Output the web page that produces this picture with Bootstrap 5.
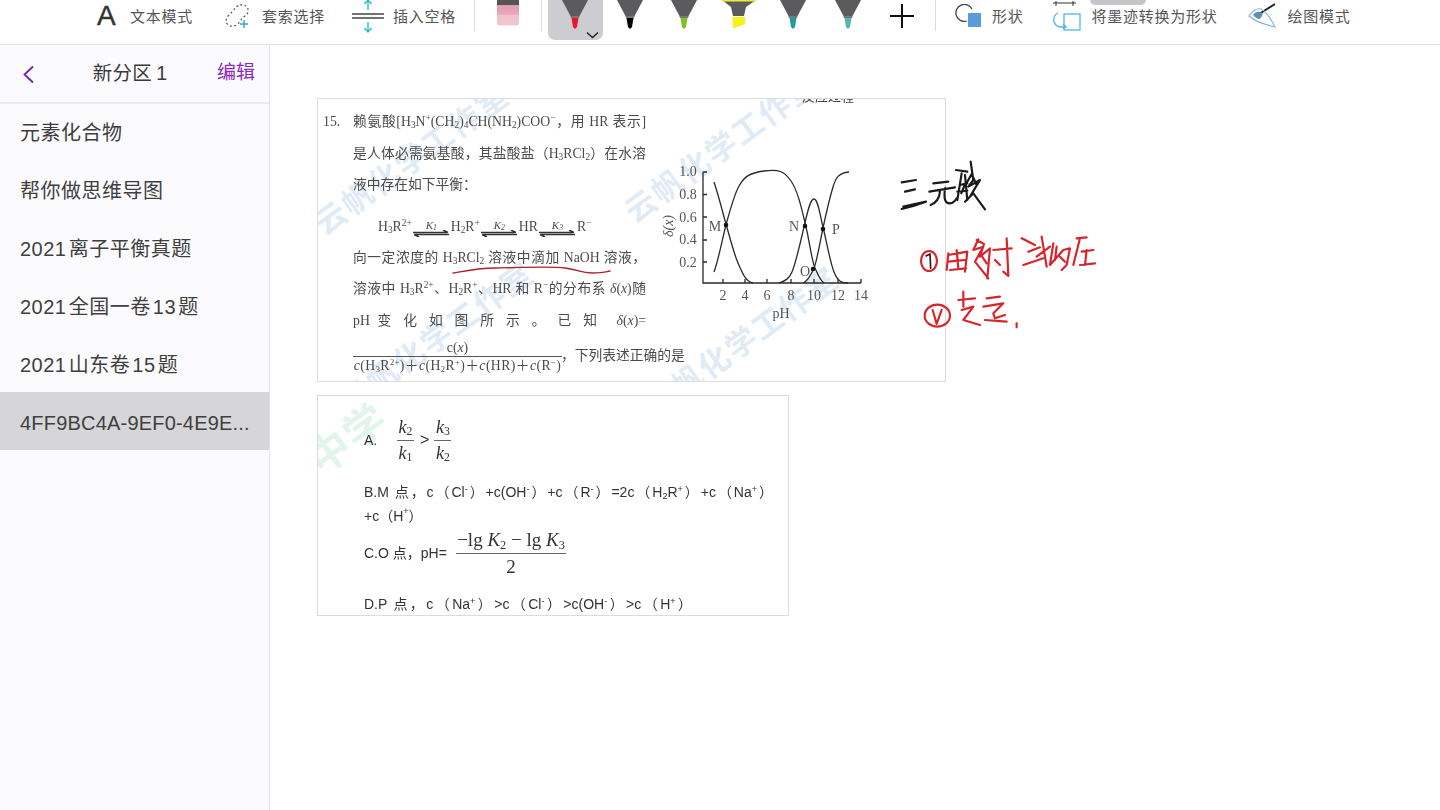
<!DOCTYPE html>
<html lang="zh">
<head>
<meta charset="UTF-8" />
<title>新分区 1</title>
<link href="https://cdn.jsdelivr.net/npm/bootstrap@5.3.0/dist/css/bootstrap.min.css" rel="stylesheet" />
<style>
  html, body { height: 100%; overflow: hidden; }
  body { font-family: "Liberation Sans", "Noto Sans CJK SC", sans-serif; background: #fff; color: #333; }

  /* toolbar */
  .tb { height: 45px; padding-left: 97px; border-bottom: 1px solid #e3e4ea; background: #fff; position: relative; }
  .tb-item { display: flex; align-items: center; height: 32px; flex: none; }
  .tb-label { font-size: 15px; letter-spacing: .75px; color: #555; white-space: nowrap; line-height: 1; }
  .tb-a { font-size: 28px; line-height: 1; color: #333; width: 17px; margin-right: 16px; -webkit-text-stroke: .4px #333; }
  .tb-lasso { margin-left: 32px; }
  .tb-lasso svg { margin-right: 12px; }
  .tb-space { margin-left: 27px; }
  .tb-space svg { margin-right: 9px; }
  .tb-sep { width: 1px; height: 31px; background: #dcdcdf; flex: none; }
  .tb-sep-1 { margin-left: 18px; }
  .tb-eraser { margin-left: 22px; align-items: flex-start; }
  .tb-sep-2 { margin-left: 22px; }
  .tb-pens { margin-left: 6px; }
  .pen-cell { width: 54.5px; height: 40px; display: flex; justify-content: center; align-items: flex-start; position: relative; flex: none; }
  .pen-on { background: #cdcdd1; border-radius: 0 0 7px 7px; }
  .pen-caret { position: absolute; right: 4px; bottom: 1px; }
  .tb-plus { align-items: center; height: 32px; }
  .tb-sep-3 { margin-left: 5.5px; }
  .tb-shape { margin-left: 19px; }
  .tb-shape svg { margin-right: 11px; }
  .tb-conv { margin-left: 28px; }
  .tb-conv svg { margin-right: 10px; }
  .tb-draw { margin-left: 30px; }
  .tb-draw svg { margin-right: 12px; }
  .tb-peek { position: absolute; left: 1090px; top: 0; width: 56px; height: 5px; background: #c6c6ca; border-radius: 0 0 6px 6px; }

  /* sidebar */
  .wrap { height: 765px; }
  .side { width: 270px; flex: none; background: #fbfbfe; border-right: 1px solid #e4e4e8; }
  .side-head { height: 59px; border-bottom: 2px solid #ebebee; position: relative; margin-bottom: -2px; padding-right: 9px; }
  .side-title { font-size: 19.5px; color: #3a3a3a; letter-spacing: .3px; }
  .side-back { position: absolute; left: 22px; top: 20px; }
  .side-edit { position: absolute; left: 217px; top: 14px; font-size: 19px; color: #8a2bb5; line-height: 1.5; }
  .sec-list .list-group-item { height: 58px; padding: 3px 0 0 20px; border: 0; background: transparent; display: flex; align-items: center; font-size: 20px; color: #3f3f3f; white-space: pre; letter-spacing: .5px; }
  .sec-list .list-group-item.sec-on { background: #d6d6d9; letter-spacing: .2px; }

  /* note canvas */
  .note { padding: 53px 0 0 47px; position: relative; }
  .clip { border: 1px solid #dcdcdc; background: #fff; position: relative; overflow: hidden; flex: none; filter: blur(.3px); }
  .clip-one { width: 629px; height: 284px; padding: 7px 0 0 5px; font-family: "Liberation Serif", "Noto Sans CJK SC", serif; font-size: 13.75px; color: #4a4a4a; }
  .clip-two { width: 472px; height: 221px; margin-top: 13px; padding: 19px 0 0 46px; font-size: 14px; color: #333; }
  .q-col { width: 323px; position: relative; z-index: 1; flex: none; }
  .q-row { height: 31.5px; line-height: 31.5px; padding-left: 30px; white-space: nowrap; }
  .q-fit { text-align: justify; text-align-last: justify; }
  .q-row sub, .q-row sup { font-size: .68em; }
  .q-first { display: flex; padding-left: 0; }
  .q-no { width: 30px; flex: none; }
  .q-eq { height: 41px; padding-left: 55px; display: flex; align-items: flex-end; line-height: 20px; padding-bottom: 5px; white-space: nowrap; }
  .q-eq sub, .q-eq sup { font-size: .68em; }
  .eq-arrow { width: 37px; display: flex; flex-direction: column; align-items: center; line-height: 1; margin: 0 1px; }
  .eq-k { font-style: italic; font-size: 11px; line-height: 10px; }
  .eq-k sub { font-size: .7em; }
  .q-frac-row { height: 40px; padding-left: 30px; display: flex; align-items: center; white-space: nowrap; }
  .q-frac { display: inline-flex; flex: none; flex-direction: column; align-items: center; width: 209px; line-height: 17px; }
  .q-frac span:first-child { border-bottom: 1px solid #555; width: 100%; text-align: center; }
  .q-frac span:last-child { letter-spacing: .4px; }
  .q-frac sub, .q-frac sup { font-size: .62em; }
  .q-tail { flex: none; margin-left: -1px; }
  .chart { margin: 54px 0 0 15px; flex: none; position: relative; z-index: 1; }
  .wm { position: absolute; font-family: "Noto Sans CJK SC", sans-serif; font-weight: 700; color: #e0ebf6; white-space: nowrap; transform: translate(-50%, -50%) rotate(-36deg); font-size: 31px; letter-spacing: 2px; }
  .wm-a { left: 93px; top: 59px; }
  .wm-b { left: 403px; top: 47px; }
  .wm-c { left: 118px; top: 237px; }
  .wm-d { left: 423px; top: 242px; }
  .peek-text { position: absolute; left: 484px; top: -9px; font-size: 13px; color: #444; line-height: 1; z-index: 1; }
  .wm-g { color: #e2f5ec; font-size: 42px; left: 28px; top: 40px; }

  .o-row { position: relative; z-index: 1; white-space: nowrap; display: flex; align-items: center; }
  .o-fit { width: 409px; text-align: justify; text-align-last: justify; }
  .o-fit-d { width: 328px; text-align: justify; text-align-last: justify; }
  .o-row sub, .o-row sup { font-size: .65em; }
  .o-a { height: 50px; margin-bottom: 15px; }
  .o-tag { width: 33px; }
  .math { font-family: "Liberation Serif", serif; font-size: 18px; }
  .o-frac { display: inline-flex; flex-direction: column; align-items: center; line-height: 25px; flex: none; min-width: 17px; }
  .o-frac span:first-child { border-bottom: 1px solid #666; width: 100%; text-align: center; }
  .o-frac i sub { font-style: normal; }
  .o-gt { margin: 0 5px 0 6px; font-size: 16px; font-family: "Liberation Sans", sans-serif; }
  .o-line { height: 24px; }
  .o-c { height: 50px; }
  .o-c-tag { width: 92px; }
  .o-big { font-size: 19px; line-height: 26px; width: 110px; }
  .o-d { height: 24px; margin-top: 14px; }

  .ink { position: absolute; left: 0; top: 0; pointer-events: none; z-index: 2; }
  .ink path, .ink ellipse { fill: none; stroke-linecap: round; stroke-linejoin: round; }
</style>
</head>
<body>
  <svg width="0" height="0" class="position-absolute">
    <symbol id="pen-body" viewBox="0 0 26 30">
      <path d="M0 0H26L17 17H9Z" fill="#5b5b5e" />
      <path d="M8.5 16H17.5L17 18H9Z" fill="#77777a" />
      <path d="M9.5 18H16.5L15 27 13 29 11 27Z" fill="currentColor" />
    </symbol>
  </svg>

  <!-- toolbar -->
  <header class="tb d-flex align-items-start">
    <div class="tb-item"><span class="tb-a">A</span><span class="tb-label">文本模式</span></div>
    <div class="tb-item tb-lasso">
      <svg width="25" height="26" viewBox="0 0 25 26"><path d="M15 2C20 1 24 4 23 9 22 13 18 13 16 17 14 21 10 24 5 23 0 21 0 16 4 12 8 9 10 3 15 2Z" fill="none" stroke="#555" stroke-width="1.2" stroke-dasharray="2 2.4" /><path d="M19 17V25M15 21H23" stroke="#2fa8c9" stroke-width="1.4" /></svg>
      <span class="tb-label">套索选择</span>
    </div>
    <div class="tb-item tb-space">
      <svg width="32" height="34" viewBox="0 0 32 34"><path d="M0 15H32M0 19H32" stroke="#444" stroke-width="1.4" /><path d="M16 1V11M12.5 5 16 1 19.5 5M16 23V33M12.5 29 16 33 19.5 29" fill="none" stroke="#22bcc4" stroke-width="1.3" /></svg>
      <span class="tb-label">插入空格</span>
    </div>
    <div class="tb-sep tb-sep-1"></div>
    <div class="tb-item tb-eraser">
      <svg width="22" height="26" viewBox="0 0 22 26"><defs><linearGradient id="er" x1="0" y1="0" x2="0" y2="1"><stop offset="0" stop-color="#e39bb0" /><stop offset=".45" stop-color="#e7a9ba" /><stop offset=".5" stop-color="#efc2cd" /><stop offset="1" stop-color="#f0c6d0" /></linearGradient></defs><rect x="0" y="0" width="22" height="5" fill="#555" /><path d="M0 5H22V23A2.5 2.5 0 0 1 19.500 25.500H2.500A2.500 2.500 0 0 1 0 23Z" fill="url(#er)" /></svg>
    </div>
    <div class="tb-sep tb-sep-2"></div>
    <div class="tb-pens d-flex">
      <div class="pen-cell pen-on">
        <svg width="26" height="30" color="#e8172c"><use href="#pen-body" /></svg>
        <svg class="pen-caret" width="13" height="8" viewBox="0 0 13 8"><path d="M1 1.500 6.500 6.500 12 1.500" fill="none" stroke="#222" stroke-width="1.400" /></svg>
      </div>
      <div class="pen-cell"><svg width="26" height="30" color="#000"><use href="#pen-body" /></svg></div>
      <div class="pen-cell"><svg width="26" height="30" color="#7cc422"><use href="#pen-body" /></svg></div>
      <div class="pen-cell">
        <svg width="34" height="30" viewBox="0 0 34 30"><path d="M0 0H34L24 7 22 16H11L9 7Z" fill="#5b5b5e" /><path d="M1 0H33V1.500H1Z" fill="#f2ea3a" /><path d="M10.500 17H23V24L11 28.500Z" fill="#f7f01a" /></svg>
      </div>
      <div class="pen-cell"><svg width="26" height="30" color="#1f9c9f"><use href="#pen-body" /></svg></div>
      <div class="pen-cell"><svg width="26" height="30" color="#52b5b0"><use href="#pen-body" /></svg></div>
      <div class="pen-cell tb-plus"><svg width="24" height="24" viewBox="0 0 24 24"><path d="M12 0V24M0 12H24" stroke="#111" stroke-width="2" /></svg></div>
    </div>
    <div class="tb-sep tb-sep-3"></div>
    <div class="tb-item tb-shape">
      <svg width="26" height="24" viewBox="0 0 26 24"><path d="M12 17A8.500 8.500 0 1 1 17 5" fill="none" stroke="#444" stroke-width="1.300" /><rect x="13" y="9" width="13" height="14" fill="#5b9bd8" /></svg>
      <span class="tb-label">形状</span>
    </div>
    <div class="tb-item tb-conv">
      <svg width="30" height="30" viewBox="0 0 30 30"><path d="M1 2H24M4 0V5M21 0V5" stroke="#333" stroke-width="1" fill="none" /><rect x="12" y="13" width="16" height="16" fill="none" stroke="#54b4ea" stroke-width="1.300" /><path d="M6 12C0 15 0 24 8 26H14M11 23 14 26 11 28" fill="none" stroke="#54b4ea" stroke-width="1.300" /></svg>
      <span class="tb-label">将墨迹转换为形状</span>
    </div>
    <div class="tb-item tb-draw">
      <svg width="28" height="26" viewBox="0 0 28 26"><path d="M27 1 8 13" stroke="#222" stroke-width="2" /><path d="M1 13C4 8 9 5 13 6 19 9 23 16 27 24 20 22 8 20 1 13Z" fill="none" stroke="#7fb2da" stroke-width="1.100" /><path d="M5 12C8 8 12 8 15 11L12 16C9 16 7 14 5 12Z" fill="#5f8fb5" /></svg>
      <span class="tb-label">绘图模式</span>
    </div>
    <div class="tb-peek"></div>
  </header>

  <div class="wrap d-flex">
    <!-- sections -->
    <aside class="side">
      <div class="side-head d-flex align-items-center justify-content-center">
        <svg class="side-back" width="13" height="19" viewBox="0 0 13 19"><path d="M11 1.500 2.500 9.500 11 17.500" fill="none" stroke="#7b1fa2" stroke-width="1.800" /></svg>
        <span class="side-title">新分区&#8201;1</span>
        <span class="side-edit">编辑</span>
      </div>
      <div class="list-group list-group-flush sec-list">
        <div class="list-group-item">元素化合物</div>
        <div class="list-group-item">帮你做思维导图</div>
        <div class="list-group-item">2021&#8202;离子平衡真题</div>
        <div class="list-group-item">2021&#8202;全国一卷&#8202;13&#8202;题</div>
        <div class="list-group-item">2021&#8202;山东卷&#8202;15&#8202;题</div>
        <div class="list-group-item sec-on">4FF9BC4A-9EF0-4E9E...</div>
      </div>
    </aside>

    <!-- note page -->
    <main class="note flex-grow-1 d-flex flex-column align-items-start">
      <div class="clip clip-one d-flex">
        <span class="wm wm-a">云帆化学工作室</span>
        <span class="wm wm-b">云帆化学工作室</span>
        <span class="wm wm-c">云帆化学工作室</span>
        <span class="wm wm-d">云帆化学工作室</span>
        <span class="peek-text">反应过程</span>
        <div class="q-col">
          <div class="q-row q-first"><span class="q-no">15.</span><span class="q-fit flex-grow-1">赖氨酸[H<sub>3</sub>N<sup>+</sup>(CH<sub>2</sub>)<sub>4</sub>CH(NH<sub>2</sub>)COO<sup>−</sup>，用 HR 表示]</span></div>
          <div class="q-row q-fit">是人体必需氨基酸，其盐酸盐（H<sub>3</sub>RCl<sub>2</sub>）在水溶</div>
          <div class="q-row">液中存在如下平衡：</div>
          <div class="q-eq">
            <span>H<sub>3</sub>R<sup>2+</sup></span>
            <span class="eq-arrow"><span class="eq-k">K<sub>1</sub></span><svg width="36" height="7" viewBox="0 0 36 7"><path d="M0 2.500H34M30 0 35 2.500M36 4.500H2M6 7 1 4.500" stroke="#333" stroke-width="1.500" fill="none" /></svg></span>
            <span>H<sub>2</sub>R<sup>+</sup></span>
            <span class="eq-arrow"><span class="eq-k">K<sub>2</sub></span><svg width="36" height="7" viewBox="0 0 36 7"><path d="M0 2.500H34M30 0 35 2.500M36 4.500H2M6 7 1 4.500" stroke="#333" stroke-width="1.500" fill="none" /></svg></span>
            <span>HR</span>
            <span class="eq-arrow"><span class="eq-k">K<sub>3</sub></span><svg width="36" height="7" viewBox="0 0 36 7"><path d="M0 2.500H34M30 0 35 2.500M36 4.500H2M6 7 1 4.500" stroke="#333" stroke-width="1.500" fill="none" /></svg></span>
            <span>R<sup>−</sup></span>
          </div>
          <div class="q-row q-fit">向一定浓度的 H<sub>3</sub>RCl<sub>2</sub> 溶液中滴加 NaOH 溶液，</div>
          <div class="q-row q-fit">溶液中 H<sub>3</sub>R<sup>2+</sup>、H<sub>2</sub>R<sup>+</sup>、HR 和 R<sup>−</sup>的分布系 <i>δ</i>(<i>x</i>)随</div>
          <div class="q-row q-fit">pH 变 化 如 图 所 示 。 已 知 &nbsp;<i>δ</i>(<i>x</i>)=</div>
          <div class="q-frac-row">
            <span class="q-frac"><span>c(<i>x</i>)</span><span><i>c</i>(H<sub>3</sub>R<sup>2+</sup>)＋<i>c</i>(H<sub>2</sub>R<sup>+</sup>)＋<i>c</i>(HR)＋<i>c</i>(R<sup>−</sup>)</span></span><span class="q-tail">，下列表述正确的是</span>
          </div>
        </div>
        <svg class="chart" width="210" height="165" viewBox="660 160 210 165">
          <g fill="none" stroke="#2a2a2a" stroke-width="1.300">
            <path d="M702 172V283H860M702 172H706M702 194.500H706M702 217H706M702 240H706M702 262H706M722 283V279M744 283V279M766 283V279M790 283V279M813 283V279M837 283V279M860 283V279" />
            <path d="M713 182C718 197 721 210 725 224S733 254 737 263 744 281 752 283" />
            <path d="M713 272C718 258 721 240 725 225S733 195 738 186 748 173 763 171 783 171 790 181 801 210 805 227 811 262 814 268 818 279 823 283" />
            <path d="M778 283C784 281 788 279 791 272S800 240 803 227 809 199 813 199 819 215 822 227 829 262 833 272 841 283 847 283" />
            <path d="M802 283C807 281 810 275 813 268S819 242 822 228 829 197 832 187 838 173 848 172" />
          </g>
          <g fill="#111"><circle cx="725" cy="225" r="2.300" /><circle cx="804" cy="226" r="2.300" /><circle cx="812" cy="269" r="2.300" /><circle cx="822" cy="229" r="2.300" /></g>
          <g font-family="Liberation Serif, serif" font-size="14" fill="#555" text-anchor="middle">
            <text x="687" y="176">1.0</text><text x="687" y="199">0.8</text><text x="687" y="222">0.6</text><text x="687" y="244">0.4</text><text x="687" y="267">0.2</text>
            <text x="722" y="300">2</text><text x="744" y="300">4</text><text x="766" y="300">6</text><text x="790" y="300">8</text><text x="813" y="300">10</text><text x="837" y="300">12</text><text x="860" y="300">14</text>
            <text x="780" y="318">pH</text>
            <text x="714" y="231">M</text><text x="793" y="231">N</text><text x="835" y="234">P</text><text x="804" y="276">O</text>
            <text transform="translate(672 226) rotate(-90)" font-style="italic">δ(x)</text>
          </g>
        </svg>
      </div>

      <div class="clip clip-two">
        <span class="wm wm-g">中学</span>
        <div class="o-row o-a">
          <span class="o-tag">A.</span>
          <span class="math d-inline-flex align-items-center">
            <span class="o-frac"><span><i>k<sub>2</sub></i></span><span><i>k<sub>1</sub></i></span></span>
            <span class="o-gt">&gt;</span>
            <span class="o-frac"><span><i>k<sub>3</sub></i></span><span><i>k<sub>2</sub></i></span></span>
          </span>
        </div>
        <div class="o-row o-line"><span class="o-fit">B.M 点，c（Cl<sup>-</sup>）+c(OH<sup>-</sup>）+c（R<sup>-</sup>）=2c（H<sub>2</sub>R<sup>+</sup>）+c（Na<sup>+</sup>）</span></div>
        <div class="o-row o-line">+c（H<sup>+</sup>）</div>
        <div class="o-row o-c"><span class="o-c-tag">C.O 点，pH=</span><span class="math o-frac o-big"><span>−lg <i>K</i><sub>2</sub> − lg <i>K</i><sub>3</sub></span><span>2</span></span></div>
        <div class="o-row o-d"><span class="o-fit-d">D.P 点，c（Na<sup>+</sup>）&gt;c（Cl<sup>-</sup>）&gt;c(OH<sup>-</sup>）&gt;c（H<sup>+</sup>）</span></div>
      </div>

      <!-- ink strokes over the page -->
      <svg class="ink" width="1170" height="765" viewBox="270 45 1170 765">
        <path d="M453 273C470 270 480 268 495 268S550 266 565 268 580 273 592 273 605 272 610 271" stroke="#a8222a" stroke-width="1.300" />
        <g transform="translate(880 150) scale(.3333)" stroke="#1b1b1b" stroke-width="6.500">
          <path d="M65 97 108 90M75 125 105 118M65 177 100 168 138 155 70 170" />
          <path d="M160 100 205 95M148 125 225 112M180 125C178 145 170 158 152 165M195 115C192 140 192 160 210 160 220 160 226 152 230 145" />
          <path d="M228 60 262 65M245 70 232 150M255 75 262 150M240 105 262 100M232 125 262 122M244 130 258 95M272 35 280 90 265 110 300 90 270 140 255 155 280 130 315 178M262 95 275 72 290 105" />
        </g>
        <g transform="translate(880 150) scale(.3333)" stroke="#d9242c" stroke-width="6.500">
          <ellipse cx="147" cy="333" rx="24" ry="30" />
          <path d="M205 310 200 360M205 315 262 305 255 365M230 300 235 355M205 335 255 330M210 360 258 355" />
          <path d="M295 268 280 300 310 290 285 335 325 385M300 310 320 340M290 270 312 282 300 320 330 295 322 385M340 300 395 295M380 265 385 378 370 365M345 330 360 345" />
          <path d="M425 265 465 285M445 305 480 292M430 345 490 325M485 260 500 350M510 290 470 320" />
          <path d="M520 280 510 345 550 300 570 295 560 345 545 360M540 320 555 335M530 290 525 330" />
          <path d="M590 265 620 262M600 265 580 345M605 305 640 300M620 300 615 345M600 345 645 340" />
          <ellipse cx="172" cy="497" rx="38" ry="33" />
          <path d="M158 480 170 522 185 480" />
          <path d="M250 425 250 470M235 450 285 445M245 480 280 470 250 510 300 525" />
          <path d="M320 445 360 440M310 470 370 460 340 490 345 505 375 495M315 510 380 515" />
          <path d="M410 520 410 532" />
        </g>
        <g transform="translate(880 150) scale(.3333)" stroke="#3a1414" stroke-width="5">
          <path d="M138 318 150 312 152 355" />
        </g>
      </svg>
    </main>
  </div>

  <script src="https://cdn.jsdelivr.net/npm/bootstrap@5.3.0/dist/js/bootstrap.bundle.min.js"></script>
</body>
</html>
